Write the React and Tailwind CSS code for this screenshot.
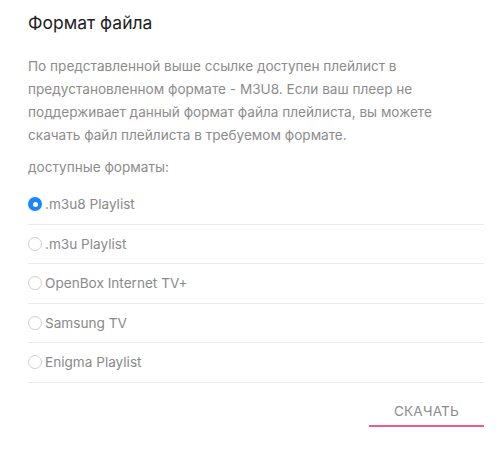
import { useState } from "react";

const formats = [
  { id: "m3u8", label: ".m3u8 Playlist" },
  { id: "m3u", label: ".m3u Playlist" },
  { id: "openbox", label: "OpenBox Internet TV+" },
  { id: "samsung", label: "Samsung TV" },
  { id: "enigma", label: "Enigma Playlist" },
];

const App = () => {
  const [selected, setSelected] = useState("m3u8");

  return (
    <div className="w-[500px] h-[452px] bg-white font-['Inter',sans-serif] pl-[28px] pr-[16px] pt-[10px]">
      <h2 className="text-[17.5px] leading-[26px] text-[#222] font-normal">Формат файла</h2>

      <p className="mt-[19px] text-[13.6px] leading-[23px] text-[#8c8c8c]">
        По представленной выше ссылке доступен плейлист в предустановленном
        формате - M3U8. Если ваш плеер не поддерживает данный формат файла
        плейлиста, вы можете скачать файл плейлиста в требуемом формате.
      </p>

      <div className="mt-[9px] text-[13.6px] leading-[23px] text-[#8c8c8c]">
        доступные форматы:
      </div>

      <ul className="mt-[6px]">
        {formats.map((f) => (
          <li
            key={f.id}
            className="flex items-center h-[39.5px] border-b border-[#ececec] cursor-pointer"
            onClick={() => setSelected(f.id)}
          >
            {selected === f.id ? (
              <span className="w-[14px] h-[14px] rounded-full bg-[#1a85ff] flex items-center justify-center">
                <span className="w-[5px] h-[5px] rounded-full bg-white" />
              </span>
            ) : (
              <span className="w-[14px] h-[14px] rounded-full border border-[#cfcfcf] bg-white" />
            )}
            <span className="ml-[3px] text-[13.6px] text-[#8a8a8a]">{f.label}</span>
          </li>
        ))}
      </ul>

      <div className="flex justify-end mt-[16px]">
        <button className="w-[115px] h-[28px] border-b-2 border-[#ef5b8c] text-[13.6px] uppercase text-[#8c8c8c] tracking-[0.2px]">
          Скачать
        </button>
      </div>
    </div>
  );
};

export default App;
